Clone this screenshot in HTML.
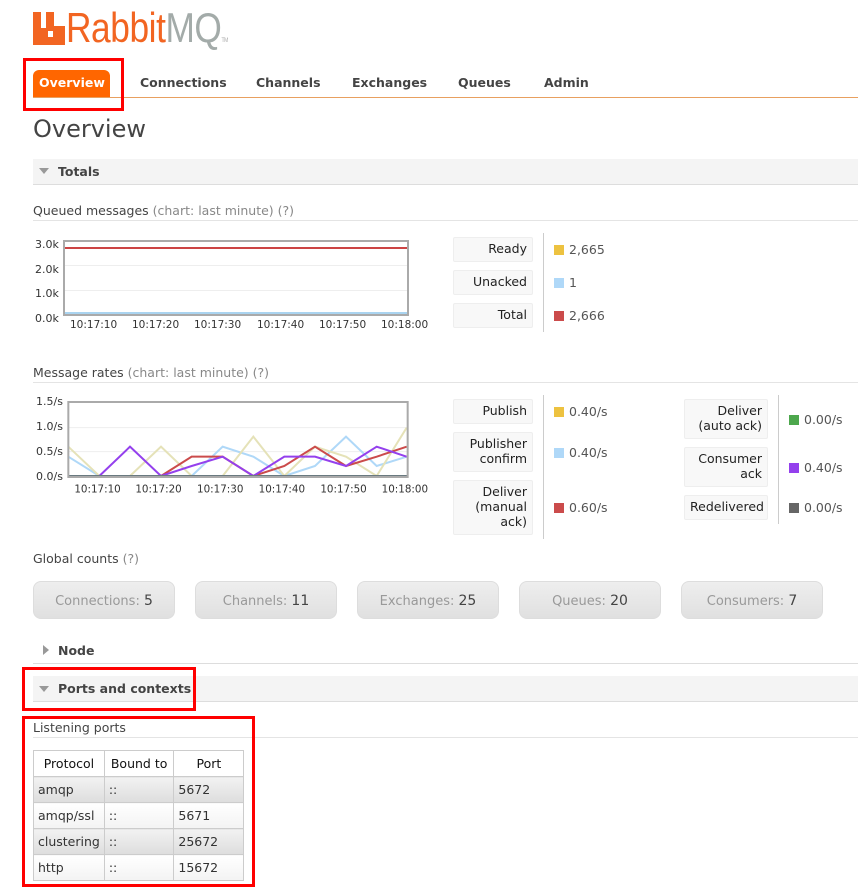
<!DOCTYPE html>
<html><head><meta charset="utf-8"><style>
*{margin:0;padding:0;box-sizing:border-box}
body{width:858px;height:888px;background:#fff;position:relative;overflow:hidden;font-family:"DejaVu Sans","Liberation Sans",sans-serif;font-size:12px;color:#444}
.a{position:absolute;white-space:nowrap}
.b{font-weight:bold}
.nav{font-size:12.5px;font-weight:bold;color:#444;top:75px}
.bar{position:absolute;left:33px;right:0;height:26px;background:#f4f4f4;border-bottom:1px solid #ddd}
.hr{position:absolute;left:33px;right:0;height:1px;background:#e4e4e4}
.lb{position:absolute;background:#f8f8f8;border:1px solid #eee;border-radius:2px;text-align:right;padding:3px 5px;font-size:12.5px;color:#222;line-height:15px}
.vl{position:absolute;width:1px;background:#ccc}
.sq{position:absolute;width:10px;height:10px}
.v{position:absolute;font-size:12.5px;color:#555}
.cnt{position:absolute;top:581px;width:142px;height:38px;border-radius:8px;background:linear-gradient(#eee,#e0e0e0);border:1px solid #ddd;text-align:center;line-height:38px;font-size:13px;color:#999}
.cnt span{color:#444;font-size:14px}
.red{position:absolute;border:3px solid #f00}
table{position:absolute;left:33px;top:750px;border-collapse:collapse;font-size:12.5px}
td,th{border:1px solid #ccc;height:26px;padding:0 4px;font-weight:normal;color:#333;white-space:nowrap;line-height:14px}
th{color:#111;background:#fff;padding:0 6px}
tr.g td{background:linear-gradient(#f2f2f2,#ddd)}
tr.w td{background:linear-gradient(#fff,#f3f3f3)}
</style></head><body>
<!-- logo -->
<svg class="a" style="left:33px;top:12px" width="32" height="33" viewBox="0 0 32 33"><path d="M0 0h8v16h5V0h8v14h11v19H0z" fill="#f26522"/><rect x="15" y="19" width="5" height="6" fill="#fff"/></svg>
<div class="a" style="left:66px;top:4px;font-family:'Liberation Sans',sans-serif;font-size:42px;color:#f26522;transform:scaleX(0.84);transform-origin:0 0;letter-spacing:-0.5px">Rabbit<span style="color:#a3aba9">MQ</span><span style="font-size:6px;color:#aaa">TM</span></div>
<!-- nav -->
<div class="a" style="left:33px;top:70px;width:77px;height:27px;background:#f60;border-radius:6px 6px 0 0"></div>
<div class="a nav" style="left:39px;color:#fff">Overview</div>
<div class="a nav" style="left:140px">Connections</div>
<div class="a nav" style="left:256px">Channels</div>
<div class="a nav" style="left:352px">Exchanges</div>
<div class="a nav" style="left:458px">Queues</div>
<div class="a nav" style="left:544px">Admin</div>
<div class="a" style="left:33px;top:97px;right:0;height:1px;background:#e8a060"></div>
<div class="red" style="left:23px;top:58px;width:101px;height:53px"></div>
<div class="a" style="left:33px;top:115px;font-size:24px;color:#444">Overview</div>
<!-- totals -->
<div class="bar" style="top:159px"></div>
<div class="a" style="left:39px;top:168px;width:0;height:0;border-left:5px solid transparent;border-right:5px solid transparent;border-top:6px solid #999"></div>
<div class="a b" style="left:58px;top:164px;font-size:12.5px">Totals</div>
<div class="a" style="left:33px;top:203px;font-size:12.5px">Queued messages <span style="color:#888">(chart: last minute) (?)</span></div>
<div class="hr" style="top:220px"></div>
<!-- chart1 -->
<div class="a" style="left:35px;top:233px;font-size:11px;line-height:24.5px;color:#333">3.0k<br>2.0k<br>1.0k<br>0.0k</div>
<div class="a" style="left:63px;top:240px;width:346px;height:76px;border:2px solid #aaa"></div>
<div class="a" style="left:65px;top:265px;width:342px;height:1px;background:#eee"></div>
<div class="a" style="left:65px;top:290px;width:342px;height:1px;background:#eee"></div>
<div class="a" style="left:65px;top:247px;width:342px;height:2px;background:#cc4444"></div>
<div class="a" style="left:65px;top:312px;width:342px;height:2px;background:#aad4f0"></div>
<div class="a" style="left:70px;top:319px;font-size:10.5px;color:#333">10:17:10</div>
<div class="a" style="left:132px;top:319px;font-size:10.5px;color:#333">10:17:20</div>
<div class="a" style="left:194px;top:319px;font-size:10.5px;color:#333">10:17:30</div>
<div class="a" style="left:257px;top:319px;font-size:10.5px;color:#333">10:17:40</div>
<div class="a" style="left:319px;top:319px;font-size:10.5px;color:#333">10:17:50</div>
<div class="a" style="left:381px;top:319px;font-size:10.5px;color:#333">10:18:00</div>
<div class="lb" style="left:453px;top:237px;width:80px;height:25px">Ready</div>
<div class="lb" style="left:453px;top:270px;width:80px;height:25px">Unacked</div>
<div class="lb" style="left:453px;top:303px;width:80px;height:25px">Total</div>
<div class="vl" style="left:543px;top:233px;height:99px"></div>
<div class="sq" style="left:554px;top:245px;background:#edc240"></div><div class="v" style="left:569px;top:242px">2,665</div>
<div class="sq" style="left:554px;top:278px;background:#afd8f8"></div><div class="v" style="left:569px;top:275px">1</div>
<div class="sq" style="left:554px;top:311px;background:#cb4b4b"></div><div class="v" style="left:569px;top:308px">2,666</div>
<!-- message rates -->
<div class="a" style="left:33px;top:365px;font-size:12.5px">Message rates <span style="color:#888">(chart: last minute) (?)</span></div>
<div class="hr" style="top:382px"></div>
<svg class="a" style="left:20px;top:380px" width="420" height="120" viewBox="0 0 1260 360">
<text x="48" y="75" font-size="33" fill="#333" font-family="DejaVu Sans">1.5/s</text>
<text x="48" y="150" font-size="33" fill="#333" font-family="DejaVu Sans">1.0/s</text>
<text x="48" y="225" font-size="33" fill="#333" font-family="DejaVu Sans">0.5/s</text>
<text x="48" y="300" font-size="33" fill="#333" font-family="DejaVu Sans">0.0/s</text>
<line x1="145" y1="143" x2="1163" y2="143" stroke="#eee" stroke-width="3"/>
<line x1="145" y1="215" x2="1163" y2="215" stroke="#eee" stroke-width="3"/>
<polyline fill="none" stroke="#afd8f8" stroke-width="6" points="145,230 238,288 330,288 423,288 515,288 608,200 700,230 793,288 885,258 978,170 1070,258 1160,230"/>
<polyline fill="none" stroke="#e5e2b8" stroke-width="6" points="145,200 238,288 330,288 423,200 515,288 608,288 700,170 793,288 885,200 978,230 1070,288 1160,143"/>
<polyline fill="none" stroke="#cb4b4b" stroke-width="6" points="423,288 515,230 608,230 700,288 793,258 885,200 978,258 1070,230 1160,200"/>
<polyline fill="none" stroke="#9440ed" stroke-width="6" points="238,288 330,200 423,288 515,258 608,230 700,288 793,230 885,230 978,258 1070,200 1160,230"/>
<line x1="145" y1="288" x2="1163" y2="288" stroke="#6a7a80" stroke-width="6"/>
<rect x="145" y="66" width="1018" height="225" fill="none" stroke="#aaa" stroke-width="6"/>
<text x="163" y="337" font-size="31" fill="#333" font-family="DejaVu Sans">10:17:10</text>
<text x="346" y="337" font-size="31" fill="#333" font-family="DejaVu Sans">10:17:20</text>
<text x="531" y="337" font-size="31" fill="#333" font-family="DejaVu Sans">10:17:30</text>
<text x="716" y="337" font-size="31" fill="#333" font-family="DejaVu Sans">10:17:40</text>
<text x="901" y="337" font-size="31" fill="#333" font-family="DejaVu Sans">10:17:50</text>
<text x="1085" y="337" font-size="31" fill="#333" font-family="DejaVu Sans">10:18:00</text>
</svg>
<div class="lb" style="left:453px;top:399px;width:80px;height:25px">Publish</div>
<div class="lb" style="left:453px;top:432px;width:80px;height:40px">Publisher<br>confirm</div>
<div class="lb" style="left:453px;top:480px;width:80px;height:55px">Deliver<br>(manual<br>ack)</div>
<div class="vl" style="left:543px;top:395px;height:144px"></div>
<div class="sq" style="left:554px;top:407px;background:#edc240"></div><div class="v" style="left:569px;top:404px">0.40/s</div>
<div class="sq" style="left:554px;top:448px;background:#afd8f8"></div><div class="v" style="left:569px;top:445px">0.40/s</div>
<div class="sq" style="left:554px;top:503px;background:#cb4b4b"></div><div class="v" style="left:569px;top:500px">0.60/s</div>
<div class="lb" style="left:684px;top:399px;width:84px;height:40px">Deliver<br>(auto ack)</div>
<div class="lb" style="left:684px;top:447px;width:84px;height:40px">Consumer<br>ack</div>
<div class="lb" style="left:684px;top:495px;width:84px;height:25px">Redelivered</div>
<div class="vl" style="left:778px;top:395px;height:129px"></div>
<div class="sq" style="left:789px;top:415px;background:#4da74d"></div><div class="v" style="left:804px;top:412px">0.00/s</div>
<div class="sq" style="left:789px;top:463px;background:#9440ed"></div><div class="v" style="left:804px;top:460px">0.40/s</div>
<div class="sq" style="left:789px;top:503px;background:#666"></div><div class="v" style="left:804px;top:500px">0.00/s</div>
<!-- global counts -->
<div class="a" style="left:33px;top:551px;font-size:12.5px">Global counts <span style="color:#888">(?)</span></div>
<div class="cnt" style="left:33px">Connections: <span>5</span></div>
<div class="cnt" style="left:195px">Channels: <span>11</span></div>
<div class="cnt" style="left:357px">Exchanges: <span>25</span></div>
<div class="cnt" style="left:519px">Queues: <span>20</span></div>
<div class="cnt" style="left:681px">Consumers: <span>7</span></div>
<!-- node -->
<div class="a" style="left:43px;top:645px;width:0;height:0;border-top:5px solid transparent;border-bottom:5px solid transparent;border-left:6px solid #999"></div>
<div class="a b" style="left:58px;top:643px;font-size:12.5px">Node</div>
<div class="hr" style="top:663px;background:#ddd"></div>
<!-- ports -->
<div class="bar" style="top:676px"></div>
<div class="a" style="left:39px;top:686px;width:0;height:0;border-left:5px solid transparent;border-right:5px solid transparent;border-top:6px solid #999"></div>
<div class="a b" style="left:58px;top:681px;font-size:12.5px">Ports and contexts</div>
<div class="red" style="left:22px;top:667px;width:174px;height:44px"></div>
<div class="a" style="left:33px;top:720px;font-size:12.5px">Listening ports</div>
<div class="hr" style="top:737px"></div>
<table>
<tr><th style="width:70px">Protocol</th><th style="width:69px">Bound to</th><th style="width:70px">Port</th></tr>
<tr class="g"><td>amqp</td><td>::</td><td>5672</td></tr>
<tr class="w"><td>amqp/ssl</td><td>::</td><td>5671</td></tr>
<tr class="g"><td>clustering</td><td>::</td><td>25672</td></tr>
<tr class="w"><td>http</td><td>::</td><td>15672</td></tr>
</table>
<div class="red" style="left:22px;top:716px;width:233px;height:171px"></div>
</body></html>
